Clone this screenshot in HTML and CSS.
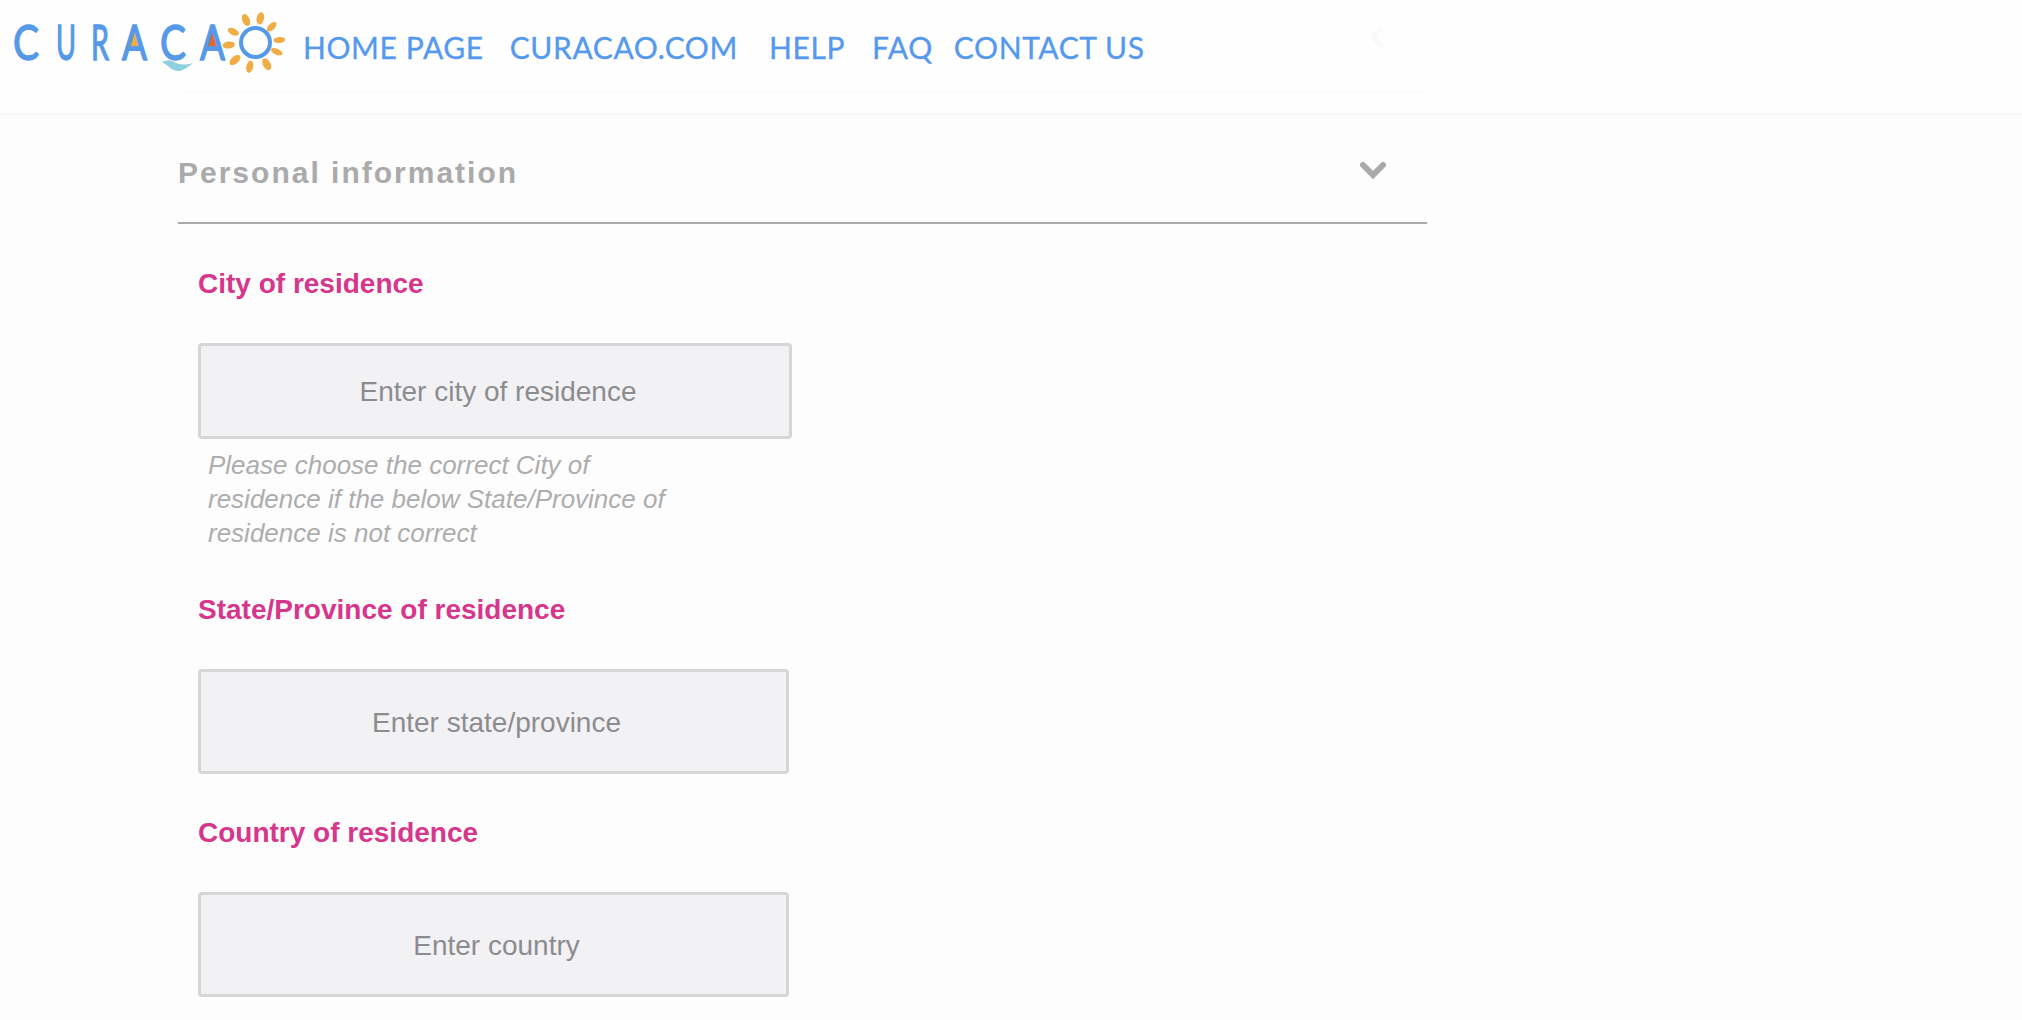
FILE: index.html
```html
<!DOCTYPE html>
<html lang="en">
<head>
<meta charset="utf-8">
<title>Curacao</title>
<link rel="stylesheet" href="styles.css">
</head>
<body>
<header class="topbar">
  <svg class="logo" width="290" height="80" viewBox="0 0 290 80" role="img" aria-label="Curacao">
    <path class="wave" d="M162 62Q170 58 176 63Q184 66 193 63Q186 69 180 71Q172 71 168 66Z"/>
    <path class="sun-ray" d="M134.500 31L127 47H142Z"/>
    <path class="roof" d="M212.500 31L205 47H220Z"/>
    <g class="logo-letters">
      <text x="13" y="60" textLength="26" lengthAdjust="spacingAndGlyphs">C</text>
      <text x="56" y="60" textLength="20" lengthAdjust="spacingAndGlyphs">U</text>
      <text x="91" y="60" textLength="18" lengthAdjust="spacingAndGlyphs">R</text>
      <text x="122" y="60" textLength="25" lengthAdjust="spacingAndGlyphs">A</text>
      <text x="160" y="60" textLength="26" lengthAdjust="spacingAndGlyphs">C</text>
      <text x="200" y="60" textLength="25" lengthAdjust="spacingAndGlyphs">A</text>
    </g>
    <circle class="sun-disc" cx="255.500" cy="42.500" r="14.500"/>
    <g class="sun-ray">
      <ellipse cx="246" cy="20" rx="3.700" ry="6.200" transform="rotate(-23 246 20)"/>
      <ellipse cx="260.300" cy="18.300" rx="3.700" ry="6.200" transform="rotate(12 260.300 18.300)"/>
      <ellipse cx="271.700" cy="26.700" rx="3.200" ry="6" transform="rotate(46 271.700 26.700)"/>
      <ellipse cx="279.300" cy="40" rx="3" ry="6" transform="rotate(84 279.300 40)"/>
      <ellipse cx="276.700" cy="51.700" rx="3" ry="6.200" transform="rotate(114 276.700 51.700)"/>
      <ellipse cx="266.700" cy="64.300" rx="3.700" ry="6.500" transform="rotate(153 266.700 64.300)"/>
      <ellipse cx="249.700" cy="66.700" rx="3.400" ry="6.200" transform="rotate(193 249.700 66.700)"/>
      <ellipse cx="235" cy="60" rx="3.700" ry="6.500" transform="rotate(229 235 60)"/>
      <ellipse cx="228.700" cy="45" rx="3.500" ry="6.200" transform="rotate(264 228.700 45)"/>
      <ellipse cx="233.300" cy="31.700" rx="3.300" ry="6" transform="rotate(296 233.300 31.700)"/>
    </g>
  </svg>
  <nav class="nav">
    <a class="nav-link home" href="#">HOME PAGE</a>
    <a class="nav-link site" href="#">CURACAO.COM</a>
    <a class="nav-link help" href="#">HELP</a>
    <a class="nav-link faq" href="#">FAQ</a>
    <a class="nav-link contact" href="#">CONTACT US</a>
  </nav>
  <div class="topbar-rule"></div>
  <svg class="ghost-chevron" width="16" height="24" viewBox="0 0 16 24"><path d="M13 2L4 12L13 22"/></svg>
</header>
<main class="content">
  <section class="panel">
    <div class="panel-head">
      <h2 class="panel-title">Personal information</h2>
      <svg class="panel-toggle" width="26" height="18" viewBox="0 0 26 18"><path d="M3 4L13 14L23 4"/></svg>
    </div>
    <form class="form">
      <label class="field-label" for="city">City of residence</label>
      <input class="field field-wide" id="city" placeholder="Enter city of residence">
      <p class="hint">Please choose the correct City of<br>residence if the below State/Province of<br>residence is not correct</p>
      <label class="field-label state-label" for="state">State/Province of residence</label>
      <input class="field field-tall" id="state" placeholder="Enter state/province">
      <label class="field-label country-label" for="country">Country of residence</label>
      <input class="field field-tall" id="country" placeholder="Enter country">
    </form>
  </section>
</main>
</body>
</html>
```
FILE: styles.css
```css
* { box-sizing: border-box; }
html, body { margin: 0; padding: 0; }
body {
  height: 1020px;
  overflow: hidden;
  background: #fdfdfd;
  font-family: "Liberation Sans", Arial, sans-serif;
}
.topbar {
  position: relative;
  height: 113px;
  background: #fefefe;
  display: flex;
  align-items: flex-start;
  box-shadow: 0 2px 5px rgba(0, 0, 0, 0.04);
}
.logo { display: block; flex: none; width: 290px; height: 80px; margin-right: 13px; }
.logo-letters { font-family: Lato, sans-serif; font-size: 49px; fill: #5599e8; stroke: #5599e8; stroke-width: 1.400; }
.wave { fill: #8ecfe0; }
.sun-ray { fill: #f0ac45; }
.roof { fill: #e4673a; }
.sun-disc { fill: none; stroke: #5599e8; stroke-width: 4; }
.nav {
  display: flex;
  align-items: baseline;
  padding-top: 27px;
  font-family: Lato, sans-serif;
  font-size: 30px;
  line-height: 40px;
  letter-spacing: 0.6px;
}
.nav-link { color: #5599ee; text-decoration: none; -webkit-text-stroke: 0.3px #5599ee; }
.site { margin-left: 26px; }
.help { margin-left: 31px; }
.faq { margin-left: 27px; }
.contact { margin-left: 21px; }
.topbar-rule { position: absolute; left: 178px; top: 92px; width: 1249px; height: 1px; background: #fafafa; }
.ghost-chevron { position: absolute; left: 1369px; top: 25px; fill: none; stroke: #fafafa; stroke-width: 5; }
.content { padding-left: 178px; }
.panel { width: 1249px; }
.panel-head {
  height: 111px;
  display: flex;
  justify-content: space-between;
  border-bottom: 2px solid #aaaaaa;
  padding-top: 40px;
}
.panel-title { margin: 0; font-size: 30px; line-height: 40px; letter-spacing: 2px; font-weight: 700; color: #aaaaaa; }
.panel-toggle { margin: 8px 41px 0 0; fill: none; stroke: #aaaaaa; stroke-width: 6; stroke-linecap: round; }
.form { display: flex; flex-direction: column; align-items: flex-start; padding: 43px 0 0 20px; }
.field-label { font-size: 28px; line-height: 34px; font-weight: 700; color: #d6378c; }
.state-label { margin-top: 43px; }
.country-label { margin-top: 42px; }
.field {
  display: block;
  width: 591px;
  height: 105px;
  margin-top: 42px;
  padding: 2px 0 0 6px;
  background: #f2f2f4;
  border: 3px solid #d6d6d6;
  border-radius: 4px;
  font: 28px "Liberation Sans", Arial, sans-serif;
  text-align: center;
  color: #8c8c8f;
}
.field::placeholder { color: #8c8c8f; opacity: 1; }
.field-wide { width: 594px; height: 96px; }
.hint { margin: 9px 0 0 10px; font-size: 26px; line-height: 34px; font-style: italic; color: #adadad; }
```
